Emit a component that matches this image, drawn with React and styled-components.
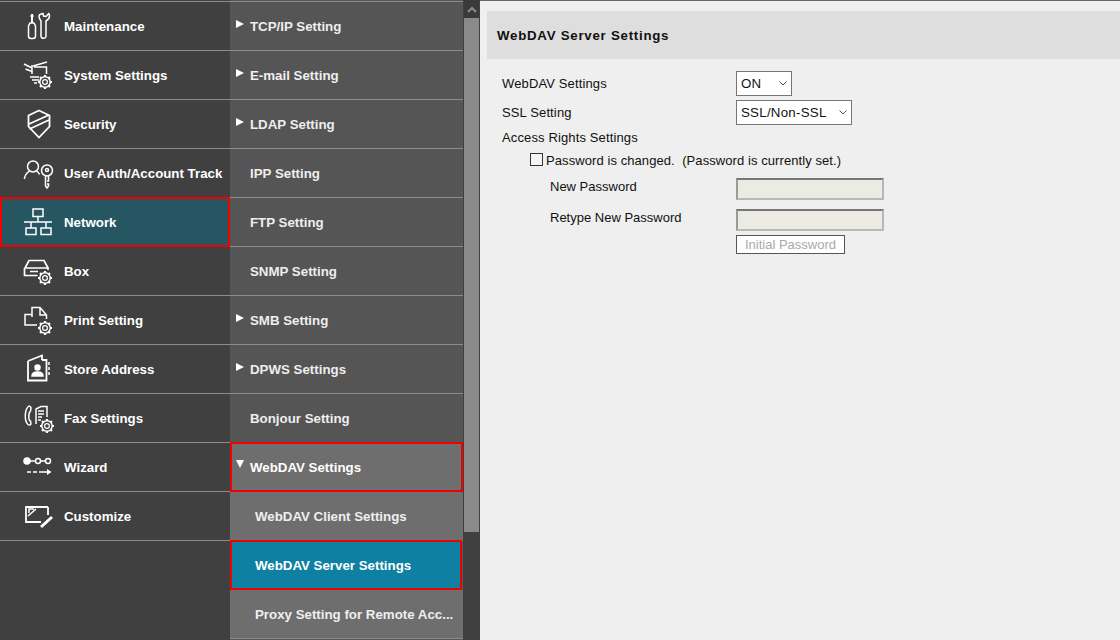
import React from "react";
import styled, { createGlobalStyle } from "styled-components";

const Global = createGlobalStyle`
  html, body { margin: 0; padding: 0; height: 640px; overflow: hidden; background: #404040; }
  * { box-sizing: border-box; }
  body { font-family: "Liberation Sans", Arial, sans-serif; }
`;
const Page = styled.div`display: flex; width: 1120px; height: 640px; overflow: hidden;`;
const MainMenu = styled.nav`
  width: 230px; flex: none; background: #404040; display: flex; flex-direction: column;
  padding-top: 1px;
`;
const MenuCap = styled.div`height: 1px; flex: none; background: #8c8c8c;`;
const MainRow = styled.div`
  height: 49px; flex: none; display: flex; align-items: center; padding-left: ${p => (p.$active ? 20 : 22)}px;
  border-bottom: 1px solid #8c8c8c;
  color: #fff; font-size: 13.3px; font-weight: 700; white-space: nowrap;
  ${p => p.$active && "background: #275663; border: 2px solid #f00000; margin-top: -1px; height: 50px;"}
`;
const IconSlot = styled.span`width: 42px; height: 30px; flex: none;`;
const SubMenu = styled.nav`width: 233px; flex: none; background: #555; display: flex; flex-direction: column; padding-top: 1px; height: 640px;`;
const SubRow = styled.div`
  height: 49px; flex: none; display: flex; align-items: center; position: relative;
  padding-left: ${p => (p.$child ? 25 : 20)}px;
  color: ${p => (p.$light ? "#fff" : "#eee")}; font-size: 13.3px; font-weight: 700; white-space: nowrap;
  background: ${p => (p.$sel ? "#0e80a2" : p.$open ? "#6e6e6e" : "#555")};
  border-bottom: 1px solid #8c8c8c;
  ${p => p.$box && `border: 2px solid #f00000; margin-top: -1px; height: 50px; padding-left: ${p.$child ? 23 : 18}px;`}
  ${p => p.$sel && "margin-right: 1px;"}
`;
const Arrow = styled.span`
  position: absolute; left: 6px; top: 18px; width: 0; height: 0;
  border-left: 8px solid #fff; border-top: 4px solid transparent; border-bottom: 4px solid transparent;
`;
const ArrowDown = styled.span`
  position: absolute; left: 4px; top: 16px; width: 0; height: 0;
  border-top: 8px solid #fff; border-left: 4.5px solid transparent; border-right: 4.5px solid transparent;
`;
const Scroll = styled.div`width: 17px; flex: none; background: #404040; display: flex; flex-direction: column; padding: 0 1px;`;
const ScrollBtn = styled.div`height: 18px; display: flex; align-items: center; justify-content: center; background: #3a3a3a;`;
const Thumb = styled.div`height: 514px; background: #8a8a8a;`;
const Main = styled.main`flex: 1; min-width: 0; background: #efefef; padding: 10px 0 0 7px; color: #111; font-size: 13px; border-top: 1px solid #666;`;
const Title = styled.h1`
  margin: 0; height: 48px; background: #dedede; display: flex; align-items: center; padding-left: 10px;
  font-size: 13.3px; font-weight: 700; letter-spacing: 0.73px; color: #111;
`;
const Form = styled.div`padding: 12px 0 0 15px; display: flex; flex-direction: column;`;
const Row = styled.div`display: flex; align-items: center; height: ${p => p.$h}px; margin-top: ${p => p.$mt || 0}px;`;
const Label = styled.div`width: 234px; flex: none; letter-spacing: 0.13px;`;
const Select = styled.div`
  width: ${p => p.$w}px; height: 25px; border: 1px solid #767676; background: #fff; color: #111;
  display: flex; align-items: center; padding-left: 4px; position: relative; font-size: 13.3px; letter-spacing: 0.25px;
`;
const Chevron = styled.svg`position: absolute; right: 4px; top: 9px;`;
const CheckLine = styled.div`display: flex; align-items: center; margin: 5px 0 0 28px; height: 18px; letter-spacing: 0.08px; white-space: pre;`;
const Check = styled.span`width: 13px; height: 13px; border: 1px solid #333; background: #f5f5f5; margin-right: 3px; flex: none; margin-top: -2px;`;
const PassRow = styled.div`display: flex; margin-top: ${p => p.$mt}px; padding-left: 48px; height: 22px;`;
const PassLabel = styled.div`width: 186px; flex: none; line-height: 16px; padding-top: 1px;`;
const PassInput = styled.div`width: 148px; height: 22px; background: #ebebe4; border: 2px solid; border-color: #767676 #b8b8b8 #b8b8b8 #9a9a9a;`;
const InitBtn = styled.div`
  margin: 4px 0 0 234px; width: 109px; height: 19px; background: #fff; border: 1px solid #555; color: #a9a9a9;
  font-size: 13px; display: flex; align-items: center; justify-content: center;
`;
const MenuIcon = styled.svg`display: block; overflow: visible;`;

const S = { fill: "none", stroke: "#fff", strokeWidth: 1.5 };
const Gear = ({ x, y }) => (
  <g transform={`translate(${x} ${y})`} {...S}>
    <circle r="5.2" />
    <circle r="2.4" strokeWidth="1.2" />
    {[0, 45, 90, 135, 180, 225, 270, 315].map(a => (
      <line key={a} x1="0" y1="-5" x2="0" y2="-7" strokeWidth="2.2" transform={`rotate(${a})`} />
    ))}
  </g>
);
const Chev = () => (
  <Chevron width="8" height="5" viewBox="0 0 8 5"><path d="M.5.5L4 4 7.500.5" fill="none" stroke="#555" strokeWidth="1" /></Chevron>
);
const icons = {
  wrench: (
    <g {...S}>
      <path d="M10 3v9M8.500 5h3" strokeWidth="2" />
      <path d="M8 12h4l1.500 3v10a2.500 2.500 0 01-2.500 2.500H9A2.500 2.500 0 016.500 25V15z" />
      <path d="M17 5c0 2 1 4 2 5v15a2.300 2.300 0 002.300 2.300h0A2.300 2.300 0 0024 25V10c2-1 3.500-3 3.500-5 0-1-.3-2-.8-2.500L24 5.500 21.500 5l-.5-2.500C19 2.800 17 3.500 17 5z" />
    </g>
  ),
  system: (
    <g {...S}>
      <path d="M2 4l8 4M3.500 9L10 11.500" />
      <path d="M10 5v9" />
      <path d="M11 6l14-4M12 7h12.500v7" />
      <path d="M8 17h9M10 20h7M12 23h3" />
      <Gear x={23} y={22} />
    </g>
  ),
  shield: (
    <g {...S}>
      <path d="M17 1.500l10.500 5v11L17 28.500 6.500 17.500v-11z" strokeWidth="1.8" />
      <path d="M7 15L27 6M7.500 20L27 11" strokeWidth="1.7" />
    </g>
  ),
  user: (
    <g {...S}>
      <circle cx="11" cy="8.500" r="5.500" />
      <path d="M2.500 21c0-4 2-6 5-8M14.500 13c1.500 1 2.500 2 3 3.500" />
      <circle cx="25" cy="12.500" r="5.500" />
      <circle cx="25" cy="12" r="1.500" />
      <path d="M23.500 18v10l1.500 2 1.500-2v-2h-1.500M26.500 18v5h-1.500" />
    </g>
  ),
  network: (
    <g {...S}>
      <rect x="11" y="2" width="10" height="7.500" />
      <path d="M16 9.500V15M2 15h28M9 15v6M24 15v6" />
      <rect x="4" y="21" width="10" height="6.500" />
      <rect x="19" y="21" width="10" height="6.500" />
    </g>
  ),
  box: (
    <g {...S}>
      <path d="M3 12l4-7.500h15l4 7.500" strokeWidth="1.7" />
      <path d="M2.500 12h23.500v2M2.500 12v7.500h13" strokeWidth="1.7" />
      <path d="M8 15.500h8" />
      <Gear x={23} y={22} />
    </g>
  ),
  print: (
    <g {...S}>
      <path d="M10 12V2.500h8l6.500 7.500v4M18 2.500v7.500h6.500" />
      <path d="M10 9.500H3V20h12" />
      <Gear x={23} y={23} />
    </g>
  ),
  store: (
    <g {...S}>
      <path d="M6 7l14-5.500V6M6 7v19.500h18.500V6H20" strokeWidth="1.8" />
      <path d="M27 8v3M27 13v3M27 18v3" strokeWidth="1.500" />
      <circle cx="15.500" cy="13.500" r="2.500" fill="#fff" />
      <path d="M10 22c0-3 3-4 5.500-4s5.500 1 5.500 4z" fill="#fff" />
    </g>
  ),
  fax: (
    <g {...S}>
      <path d="M7 3C2.500 6 2 18 6 21.500c1 .8 2.500.8 3-.5l-.5-3c-2 0-2.500-8 0-10l.5-3c-.3-1.300-1-2-2-2z" />
      <path d="M14 21V6l5-2.500h6V14M16 8h6M16 11h6M16 14h4M16 17h3" />
      <Gear x={25} y={23} />
    </g>
  ),
  wizard: (
    <g {...S}>
      <circle cx="5" cy="9" r="3" fill="#fff" />
      <circle cx="16" cy="9" r="2.500" />
      <circle cx="26" cy="9" r="2.500" />
      <path d="M8 9h5.500M18.500 9h5M5 20h4M11 20h4M17 20h9" />
      <path d="M25 17l4.500 3-4.500 3z" fill="#fff" stroke="none" />
    </g>
  ),
  customize: (
    <g {...S}>
      <path d="M26 6v8M26 6H4v15h15" strokeWidth="1.800" />
      <path d="M6 15l8-7M7 12V8h5" />
      <path d="M19 26l11-10" strokeWidth="3" />
    </g>
  ),
};

const mains = [
  ["wrench", "Maintenance"], ["system", "System Settings"], ["shield", "Security"],
  ["user", "User Auth/Account Track"], ["network", "Network", true], ["box", "Box"],
  ["print", "Print Setting"], ["store", "Store Address"], ["fax", "Fax Settings"],
  ["wizard", "Wizard"], ["customize", "Customize"],
];
const subs = [
  { t: "TCP/IP Setting", a: 1 }, { t: "E-mail Setting", a: 1 }, { t: "LDAP Setting", a: 1 },
  { t: "IPP Setting" }, { t: "FTP Setting" }, { t: "SNMP Setting" }, { t: "SMB Setting", a: 1 },
  { t: "DPWS Settings", a: 1 }, { t: "Bonjour Setting" },
  { t: "WebDAV Settings", d: 1, open: 1, box: 1 },
  { t: "WebDAV Client Settings", child: 1, open: 1 },
  { t: "WebDAV Server Settings", child: 1, sel: 1, box: 1 },
  { t: "Proxy Setting for Remote Acc...", child: 1, open: 1 },
];

export default function App() {
  return (
    <Page>
      <Global />
      <MainMenu>
        <MenuCap />
        {mains.map(([i, t, a]) => (
          <MainRow key={t} $active={a}>
            <IconSlot><MenuIcon width="32" height="30" viewBox="0 0 32 30">{icons[i]}</MenuIcon></IconSlot>
            {t}
          </MainRow>
        ))}
      </MainMenu>
      <SubMenu>
        <MenuCap />
        {subs.map(s => (
          <SubRow key={s.t} $child={s.child} $sel={s.sel} $open={s.open} $box={s.box} $light={s.sel || s.d}>
            {s.a && <Arrow />}
            {s.d && <ArrowDown />}
            {s.t}
          </SubRow>
        ))}
      </SubMenu>
      <Scroll>
        <ScrollBtn>
          <svg width="10" height="7" viewBox="0 0 10 7"><path d="M1 6l4-4 4 4" fill="none" stroke="#8a8a8a" strokeWidth="2" /></svg>
        </ScrollBtn>
        <Thumb />
      </Scroll>
      <Main>
        <Title>WebDAV Server Settings</Title>
        <Form>
          <Row $h={25}>
            <Label>WebDAV Settings</Label>
            <Select $w={56}>ON<Chev /></Select>
          </Row>
          <Row $h={25} $mt={4}>
            <Label>SSL Setting</Label>
            <Select $w={116}>SSL/Non-SSL<Chev /></Select>
          </Row>
          <Row $h={18} $mt={3}><Label>Access Rights Settings</Label></Row>
          <CheckLine><Check />Password is changed.  (Password is currently set.)</CheckLine>
          <PassRow $mt={9}><PassLabel>New Password</PassLabel><PassInput /></PassRow>
          <PassRow $mt={9}><PassLabel>Retype New Password</PassLabel><PassInput /></PassRow>
          <InitBtn>Initial Password</InitBtn>
        </Form>
      </Main>
    </Page>
  );
}
